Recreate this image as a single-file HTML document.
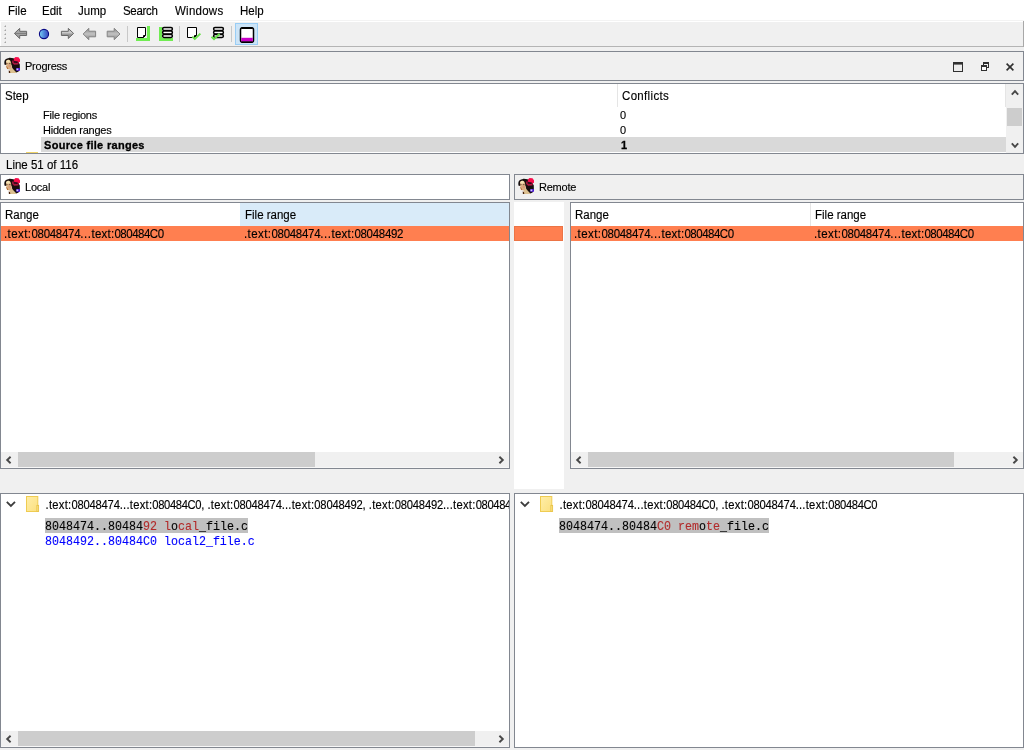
<!DOCTYPE html>
<html lang="en">
<head>
<meta charset="utf-8">
<title>IDA merge - Source file ranges</title>
<style>
html,body{margin:0;padding:0;}
body{width:1024px;height:750px;overflow:hidden;background:#f0f0f0;position:relative;
  font-family:"Liberation Sans",sans-serif;font-size:11.5px;color:#000;}
.abs,.t,.box,.ln{position:absolute;}
.t{white-space:pre;line-height:14px;height:14px;-webkit-text-stroke:0.14px;}
.box{box-sizing:border-box;border:1px solid #828790;}
.w{background:#fff;}
.g{background:#f0f0f0;}
.mono{font-family:"Liberation Mono",monospace;font-size:11.67px;}
.red{color:#b22c2c;}
.blue{color:#0000ff;}
.b{font-weight:bold;-webkit-text-stroke:0.3px;}
.d,.r{font-size:11px;letter-spacing:-0.24px;}
.bt{font-size:11.22px;}
.h,.m{transform:scaleY(1.07);transform-origin:0 11px;}
.d,.r,.bt{transform:scaleY(1.06);transform-origin:0 11px;}
.mono{-webkit-text-stroke:0.12px;transform:scaleY(1.12);transform-origin:0 10.5px;}
.s1{letter-spacing:0.45px;}.s2{letter-spacing:-0.31px;}.s3{letter-spacing:0.55px;}.s4{letter-spacing:0.25px;}.s5{letter-spacing:-0.5px;}
.bt .s1{letter-spacing:0.27px;}.bt .s2{letter-spacing:-0.21px;}.bt .s3{letter-spacing:0.23px;}.bt .s4{letter-spacing:0.28px;}.bt .s5{letter-spacing:-0.36px;}
svg{position:absolute;overflow:visible;}
</style>
</head>
<body>


<svg width="0" height="0" style="left:0;top:0;">
  <defs>
    <filter id="blur1" x="-20%" y="-20%" width="140%" height="140%"><feGaussianBlur stdDeviation="0.45"/></filter>
    <linearGradient id="gFolder" x1="0" y1="0" x2="1" y2="1">
      <stop offset="0" stop-color="#ffeea8"/><stop offset="1" stop-color="#fbe080"/>
    </linearGradient>
    <symbol id="lady" viewBox="0 0 16 16">
      <g filter="url(#blur1)">
        <!-- hair -->
        <path d="M0.3 5 C0.4 2.6 2.2 1.1 5 0.9 C8 0.7 10.6 1.6 12.4 3.2 C14.6 4.6 15.8 7 15.6 10 C15.5 12 15 13.6 14.2 14.4 L11.4 14.6 L9.4 11 L8 8 L2 8 L0.4 7.6 Z" fill="#140d0c"/>
        <!-- neck -->
        <path d="M5.3 11.4 L8.6 9.6 C9.6 12.4 11.2 14.4 12.8 15.9 L5.5 15.9 C5.9 14.4 5.8 12.8 5.3 11.4 Z" fill="#dcc090"/>
        <path d="M4.7 13.6 L6 13.9 L6.3 15.9 L4.9 15.9 Z" fill="#4a200c"/>
        <!-- face -->
        <ellipse cx="4.9" cy="7.5" rx="2.7" ry="4.8" transform="rotate(-10 4.9 7.5)" fill="#dab184"/>
        <ellipse cx="4.1" cy="4.3" rx="1.9" ry="1.5" fill="#f6e4b6"/>
        <ellipse cx="5.8" cy="9" rx="1.5" ry="1.3" fill="#dc9c78"/>
        <path d="M1.9 9 L3.2 12 L4.6 12.2 L3 9.4 Z" fill="#b8682e"/>
        <rect x="2.2" y="6.2" width="1.3" height="0.8" fill="#6a4a38"/>
        <rect x="4.9" y="6.3" width="1.6" height="0.8" fill="#5a3c2c"/>
        <path d="M7.5 3.4 L12 3 L15.6 7 L15.6 10.5 L14.4 14.6 L12.5 15.4 L10 13 L8.2 10.8 L7.7 8 L7.3 5.6 Z" fill="#140d0c"/>
        <!-- hat -->
        <path d="M9.7 1.8 L11.5 -0.1 L14.5 0.3 L16.1 2.6 L15.9 4.9 L13 5.3 L10 4 Z" fill="#f80a4c"/>
        <path d="M8 3.4 L10 3.6 L14.7 5 L14.5 7.5 L10 7.7 L8.2 6 Z" fill="#a8163e"/>
        <path d="M9.6 3.9 L13.8 4.5 L13.6 6 L9.8 5.8 Z" fill="#2a0616"/>
        <!-- badge -->
        <rect x="12.2" y="11" width="3.8" height="2.8" rx="0.5" fill="#4512d4"/>
        <rect x="12.5" y="11.5" width="1.8" height="1.7" fill="#d6ccff"/>
      </g>
    </symbol>
    <symbol id="folder" viewBox="0 0 14 17">
      <rect x="0.5" y="0.5" width="11.3" height="15" fill="url(#gFolder)" stroke="#efcc52" stroke-width="1"/>
      <rect x="10.9" y="9.4" width="1.7" height="6.1" fill="#fde58c" stroke="#e8c348" stroke-width="0.9"/>
    </symbol>
    <symbol id="chevL" viewBox="0 0 8 8"><path d="M5.6 0.8 L2.2 4 L5.6 7.2" fill="none" stroke="#484848" stroke-width="1.9"/></symbol>
    <symbol id="chevR" viewBox="0 0 8 8"><path d="M2.4 0.8 L5.8 4 L2.4 7.2" fill="none" stroke="#484848" stroke-width="1.9"/></symbol>
    <symbol id="chevU" viewBox="0 0 8 8"><path d="M0.8 5.6 L4 2.2 L7.2 5.6" fill="none" stroke="#484848" stroke-width="1.9"/></symbol>
    <symbol id="chevD" viewBox="0 0 8 8"><path d="M0.8 2.4 L4 5.8 L7.2 2.4" fill="none" stroke="#484848" stroke-width="1.9"/></symbol>
    <symbol id="expand" viewBox="0 0 10 7"><path d="M0.8 0.9 L4.9 5 L9 0.9" fill="none" stroke="#3c3c3c" stroke-width="1.8"/></symbol>
  </defs>
</svg>

<!-- ===== menu bar ===== -->
<div class="abs w" id="menubar" style="left:0;top:0;width:1024px;height:20px;"></div>
<div class="abs" style="left:0;top:20px;width:1024px;height:1px;background:#f3f3f3;"></div>
<div class="abs" style="left:0;top:21px;width:1024px;height:1px;background:#ffffff;"></div>
<span class="t m h0" id="m1" style="left:8px;top:4px;">File</span>
<span class="t m h0" id="m2" style="left:42px;top:4px;">Edit</span>
<span class="t m h0" id="m3" style="left:78px;top:4px;">Jump</span>
<span class="t m h0" id="m4" style="left:123px;letter-spacing:-0.3px;top:4px;">Search</span>
<span class="t m h0" id="m5" style="left:175px;letter-spacing:0.25px;top:4px;">Windows</span>
<span class="t m h0" id="m6" style="left:240px;top:4px;">Help</span>

<!-- ===== toolbar ===== -->
<div class="abs" id="toolbar" style="left:0;top:22px;width:1024px;height:24px;background:#f0f0f0;border-left:1px solid #fff;box-sizing:border-box;"></div>
<div class="abs" style="left:0;top:46px;width:1024px;height:1px;background:#b4b4b4;"></div>
<div class="abs" style="left:1023px;top:21px;width:1px;height:26px;background:#a8a8a8;"></div>


<svg id="tbicons" style="left:0;top:22px;" width="280" height="24" viewBox="0 22 280 24">
  <defs>
    <linearGradient id="gArrow" x1="0" y1="0" x2="0" y2="1">
      <stop offset="0" stop-color="#b0b0b0"/><stop offset="0.4" stop-color="#a6a6a6"/><stop offset="0.5" stop-color="#7e7e7e"/><stop offset="0.6" stop-color="#a2a2a2"/><stop offset="1" stop-color="#9a9a9a"/>
    </linearGradient>
    <linearGradient id="gArrow2" x1="0" y1="0" x2="0" y2="1">
      <stop offset="0" stop-color="#a8a8a8"/><stop offset="0.38" stop-color="#d0d0d0"/><stop offset="0.6" stop-color="#9a9a9a"/><stop offset="1" stop-color="#8a8a8a"/>
    </linearGradient>
    <linearGradient id="gArrowB" x1="0" y1="0" x2="0" y2="1">
      <stop offset="0" stop-color="#8a8a8a"/><stop offset="0.5" stop-color="#c2c2c2"/><stop offset="1" stop-color="#848484"/>
    </linearGradient>
    <linearGradient id="gBall" x1="0" y1="0" x2="1" y2="0">
      <stop offset="0" stop-color="#7fd4f4"/><stop offset="0.5" stop-color="#4f86dc"/><stop offset="1" stop-color="#3a45b8"/>
    </linearGradient>
  </defs>
  <!-- gripper -->
  <g fill="#a4a4a4">
    <path d="M6 25 V27 H4 Z"/>
    <path d="M6 29 V31 H4 Z"/>
    <path d="M6 33 V35 H4 Z"/>
    <path d="M6 37 V39 H4 Z"/>
    <path d="M6 41 V43 H4 Z"/>
  </g>
  <!-- arrow 1: left, thin outline -->
  <path d="M14.4 33.4 L19.7 28.4 L19.7 31.3 L26.6 31.3 L26.6 35.5 L19.7 35.5 L19.7 38.5 Z" fill="url(#gArrow)" stroke="#686868" stroke-width="1" stroke-linejoin="miter"/>
  <!-- blue ball -->
  <circle cx="44" cy="34" r="4.6" fill="url(#gBall)" stroke="#080884" stroke-width="1.1"/>
  <!-- arrow 2: right, thin outline -->
  <path d="M73.6 33.4 L68.3 28.4 L68.3 31.3 L61.4 31.3 L61.4 35.5 L68.3 35.5 L68.3 38.5 Z" fill="url(#gArrow2)" stroke="#686868" stroke-width="1"/>
  <!-- arrow 3: left, solid -->
  <path d="M83.2 34 L88.8 28.3 L88.8 31.2 L95.6 31.2 L95.6 36.8 L88.8 36.8 L88.8 39.7 Z" fill="url(#gArrowB)" stroke="#848484" stroke-width="1"/>
  <!-- arrow 4: right, solid -->
  <path d="M120 34 L114.2 28.3 L114.2 31.2 L107.2 31.2 L107.2 36.8 L114.2 36.8 L114.2 39.7 Z" fill="url(#gArrowB)" stroke="#848484" stroke-width="1"/>
  <!-- separators -->
  <rect x="127" y="26" width="1" height="16" fill="#c8c8c8"/>
  <rect x="179" y="26" width="1" height="16" fill="#c8c8c8"/>
  <rect x="231" y="26" width="1" height="16" fill="#c8c8c8"/>
  <!-- icon A: page + green corner right/bottom -->
  <path d="M147 26 h3 v15 h-14 v-3 h11 z" fill="#70ec52"/>
  <path d="M137.5 27.5 h8 v8 l-2 2 h-6 z" fill="#fff" stroke="#000" stroke-width="1"/>
  <path d="M143.5 37.5 v-2 h2" fill="none" stroke="#000" stroke-width="1"/>
  <!-- icon B: stack + green corner left/bottom -->
  <path d="M159 27 h3 v11 h11 v3 h-14 z" fill="#70ec52"/>
  <g fill="#fff" stroke="#000" stroke-width="1.5">
    <rect x="162.6" y="27.6" width="9.8" height="2.8" rx="1.4"/>
    <rect x="162.6" y="31.1" width="9.8" height="2.8" rx="1.4"/>
    <rect x="162.6" y="34.6" width="9.8" height="2.8" rx="1.4"/>
  </g>
  <!-- icon C: page + check -->
  <path d="M187.5 27.5 h9 v8 l-2 2 h-7 z" fill="#fff" stroke="#000" stroke-width="1"/>
  <path d="M194.5 37.5 v-2 h2" fill="none" stroke="#000" stroke-width="1"/>
  <path d="M192.3 36.6 L194.8 39 L200.4 33.6" fill="none" stroke="#68e04a" stroke-width="1.9"/>
  <!-- icon D: stack + check -->
  <g fill="#fff" stroke="#000" stroke-width="1.5">
    <rect x="213.6" y="27.6" width="9.8" height="2.8" rx="1.4"/>
    <rect x="213.6" y="31.1" width="9.8" height="2.8" rx="1.4"/>
    <rect x="213.6" y="34.6" width="9.8" height="2.8" rx="1.4"/>
  </g>
  <path d="M211.5 36.8 L214 39.2 L219.6 33.8" fill="none" stroke="#68e04a" stroke-width="1.9"/>
  <!-- icon E: checked toolbutton -->
  <rect x="235.5" y="23.5" width="22" height="21" fill="#cce4f7" stroke="#99cdf5" stroke-width="1"/>
  <rect x="240.5" y="27.75" width="13" height="14.5" rx="2" fill="#fff" stroke="#000" stroke-width="1.5"/>
  <rect x="241.2" y="37.8" width="11.6" height="3.8" fill="#c800c8"/>
  <rect x="241.5" y="27" width="11" height="2" fill="#000"/>
  <rect x="241.5" y="41.4" width="11" height="1.6" fill="#000"/>
</svg>

<!-- ===== Progress dock title ===== -->
<div class="box g" id="dockProgress" style="left:0;top:51px;width:1024px;height:30px;"></div>
<span class="t d" id="tProgress" style="left:25px;top:59px;">Progress</span>

<!-- ===== Step table ===== -->
<div class="box w" id="stepTable" style="left:0;top:83px;width:1024px;height:71px;"></div>
<div class="abs" style="left:617px;top:84px;width:1px;height:23px;background:#e5e5e5;"></div>
<div class="abs" style="left:1005px;top:84px;width:1px;height:23px;background:#e5e5e5;"></div>
<div class="abs" style="left:41px;top:137px;width:965px;height:15px;background:#d9d9d9;"></div>
<div class="abs" style="left:26px;top:152px;width:12px;height:1px;background:#f0d468;"></div>
<span class="t h" id="hStep" style="left:5px;top:89px;">Step</span>
<span class="t h" id="hConf" style="left:622px;letter-spacing:0.33px;top:89px;">Conflicts</span>
<span class="t r" id="r1" style="left:43px;top:108px;">File regions</span>
<span class="t r" id="r2" style="left:43px;top:123px;">Hidden ranges</span>
<span class="t r b" id="r3" style="left:44px;letter-spacing:0.3px;top:138px;">Source file ranges</span>
<span class="t r" id="c1" style="left:620px;top:108px;">0</span>
<span class="t r" id="c2" style="left:620px;top:123px;">0</span>
<span class="t r b" id="c3" style="left:621px;top:138px;">1</span>
<!-- vertical scrollbar -->
<div class="abs g" style="left:1006px;top:84px;width:17px;height:69px;"></div>
<div class="abs" style="left:1007px;top:108px;width:15px;height:18px;background:#cdcdcd;"></div>

<!-- ===== status line ===== -->
<span class="t h" id="tLine" style="left:6px;top:158px;">Line 51 of 116</span>

<!-- ===== Local / Remote dock titles ===== -->
<div class="box w" id="dockLocal" style="left:0;top:174px;width:510px;height:26px;"></div>
<span class="t d" id="tLocal" style="left:25px;top:180px;">Local</span>
<div class="box g" id="dockRemote" style="left:514px;top:174px;width:510px;height:26px;"></div>
<span class="t d" id="tRemote" style="left:539px;top:180px;">Remote</span>

<!-- ===== Local table ===== -->
<div class="box w" id="localTable" style="left:0;top:202px;width:510px;height:267px;"></div>
<div class="abs" style="left:240px;top:203px;width:269px;height:23px;background:#d9ebf9;"></div>
<div class="abs" style="left:1px;top:226px;width:508px;height:15px;background:#ff7f50;"></div>
<span class="t h" id="lhRange" style="left:5px;top:208px;">Range</span>
<span class="t h" id="lhFile" style="left:245px;top:208px;">File range</span>
<span class="t h" id="l1" style="left:3.9px;top:227px;"><span class="s1">.text:</span><span class="s2">08048474</span><span class="s3">...</span><span class="s4">text:</span><span class="s5">080484C0</span></span>
<span class="t h" id="l2" style="left:243.9px;top:227px;"><span class="s1">.text:</span><span class="s2">08048474</span><span class="s3">...</span><span class="s4">text:</span><span class="s2">08048492</span></span>
<!-- h scrollbar -->
<div class="abs g" style="left:1px;top:452px;width:508px;height:15px;"></div>
<div class="abs" style="left:1px;top:467px;width:508px;height:1px;background:#f7f7f7;"></div>
<div class="abs" style="left:18px;top:452px;width:297px;height:15px;background:#cdcdcd;"></div>

<!-- ===== middle strip ===== -->
<div class="abs w" style="left:514px;top:202px;width:50px;height:287px;"></div>
<div class="abs" style="left:514px;top:226px;width:49px;height:15px;background:#ff7f50;box-sizing:border-box;border:1px solid #ec7445;"></div>

<!-- ===== Remote table ===== -->
<div class="box w" id="remoteTable" style="left:570px;top:202px;width:454px;height:267px;"></div>
<div class="abs" style="left:810px;top:203px;width:1px;height:23px;background:#e5e5e5;"></div>
<div class="abs" style="left:571px;top:226px;width:452px;height:15px;background:#ff7f50;"></div>
<span class="t h" id="rhRange" style="left:575px;top:208px;">Range</span>
<span class="t h" id="rhFile" style="left:815px;top:208px;">File range</span>
<span class="t h" id="rr1" style="left:573.9px;top:227px;"><span class="s1">.text:</span><span class="s2">08048474</span><span class="s3">...</span><span class="s4">text:</span><span class="s5">080484C0</span></span>
<span class="t h" id="rr2" style="left:813.9px;top:227px;"><span class="s1">.text:</span><span class="s2">08048474</span><span class="s3">...</span><span class="s4">text:</span><span class="s5">080484C0</span></span>
<div class="abs g" style="left:571px;top:452px;width:452px;height:15px;"></div>
<div class="abs" style="left:571px;top:467px;width:452px;height:1px;background:#f7f7f7;"></div>
<div class="abs" style="left:588px;top:452px;width:366px;height:15px;background:#cdcdcd;"></div>

<!-- ===== bottom-left detail ===== -->
<div class="box w" id="botLeft" style="left:0;top:493px;width:510px;height:255px;overflow:hidden;">
  <span class="t bt" id="bl0" style="left:44.5px;top:4px;"><span class="s1">.text:</span><span class="s2">08048474</span><span class="s3">...</span><span class="s4">text:</span><span class="s5">080484C0</span>, <span class="s1">.text:</span><span class="s2">08048474</span><span class="s3">...</span><span class="s4">text:</span><span class="s2">08048492</span>, <span class="s1">.text:</span><span class="s2">08048492</span><span class="s3">...</span><span class="s4">text:</span><span class="s5">080484C0</span></span>
</div>
<div class="abs" style="left:45px;top:518px;width:203px;height:15px;background:#c0c0c0;"></div>
<span class="t mono" id="bl1" style="left:45px;top:519.5px;">8048474..80484<span class="red">92</span> <span class="red">l</span>o<span class="red">cal</span>_file.c</span>
<span class="t mono blue" id="bl2" style="left:45px;top:534.5px;">8048492..80484C0 local2_file.c</span>
<div class="abs g" style="left:1px;top:731px;width:508px;height:15px;"></div>
<div class="abs" style="left:1px;top:746px;width:508px;height:1px;background:#f7f7f7;"></div>
<div class="abs" style="left:18px;top:731px;width:457px;height:15px;background:#cdcdcd;"></div>

<!-- ===== bottom-right detail ===== -->
<div class="box w" id="botRight" style="left:514px;top:493px;width:510px;height:255px;overflow:hidden;">
  <span class="t bt" id="br0" style="left:44.5px;top:4px;"><span class="s1">.text:</span><span class="s2">08048474</span><span class="s3">...</span><span class="s4">text:</span><span class="s5">080484C0</span>, <span class="s1">.text:</span><span class="s2">08048474</span><span class="s3">...</span><span class="s4">text:</span><span class="s5">080484C0</span></span>
</div>
<div class="abs" style="left:559px;top:518px;width:210px;height:15px;background:#c0c0c0;"></div>
<span class="t mono" id="br1" style="left:559px;top:519.5px;">8048474..80484<span class="red">C0</span> <span class="red">rem</span>o<span class="red">te</span>_file.c</span>


<!-- ===== icons ===== -->
<svg style="left:4px;top:57px;" width="16" height="16"><use href="#lady"/></svg>
<svg style="left:4px;top:178px;" width="16" height="16"><use href="#lady"/></svg>
<svg style="left:518px;top:178px;" width="16" height="16"><use href="#lady"/></svg>
<!-- dock buttons -->
<svg style="left:950px;top:60px;" width="70" height="14" viewBox="950 60 70 14">
  <rect x="953.5" y="62.5" width="9" height="9" fill="#ececec" stroke="#303030" stroke-width="1"/>
  <rect x="953" y="62" width="10" height="2.6" fill="#303030"/>
  <rect x="983.5" y="62.5" width="5" height="5" fill="#f0f0f0" stroke="#303030" stroke-width="1"/>
  <rect x="983" y="62" width="6" height="2" fill="#303030"/>
  <rect x="981.5" y="65.5" width="5" height="5" fill="#fafafa" stroke="#303030" stroke-width="1"/>
  <rect x="981" y="65" width="6" height="2" fill="#303030"/>
  <path d="M1006.6 63.6 L1013.4 70.4 M1013.4 63.6 L1006.6 70.4" stroke="#303030" stroke-width="1.6" fill="none"/>
</svg>
<!-- scrollbar arrows -->
<svg style="left:1010.5px;top:89px;" width="8" height="8"><use href="#chevU"/></svg>
<svg style="left:1010.5px;top:141px;" width="8" height="8"><use href="#chevD"/></svg>
<svg style="left:5px;top:455.5px;" width="8" height="8"><use href="#chevL"/></svg>
<svg style="left:497px;top:455.5px;" width="8" height="8"><use href="#chevR"/></svg>
<svg style="left:575px;top:455.5px;" width="8" height="8"><use href="#chevL"/></svg>
<svg style="left:1011px;top:455.5px;" width="8" height="8"><use href="#chevR"/></svg>
<svg style="left:5px;top:734.5px;" width="8" height="8"><use href="#chevL"/></svg>
<svg style="left:497px;top:734.5px;" width="8" height="8"><use href="#chevR"/></svg>
<!-- tree expanders + folders -->
<svg style="left:5.5px;top:500.5px;" width="10" height="7"><use href="#expand"/></svg>
<svg style="left:519.5px;top:500.5px;" width="10" height="7"><use href="#expand"/></svg>
<svg style="left:26px;top:496px;" width="14" height="17"><use href="#folder"/></svg>
<svg style="left:540px;top:496px;" width="14" height="17"><use href="#folder"/></svg>

</body>
</html>
